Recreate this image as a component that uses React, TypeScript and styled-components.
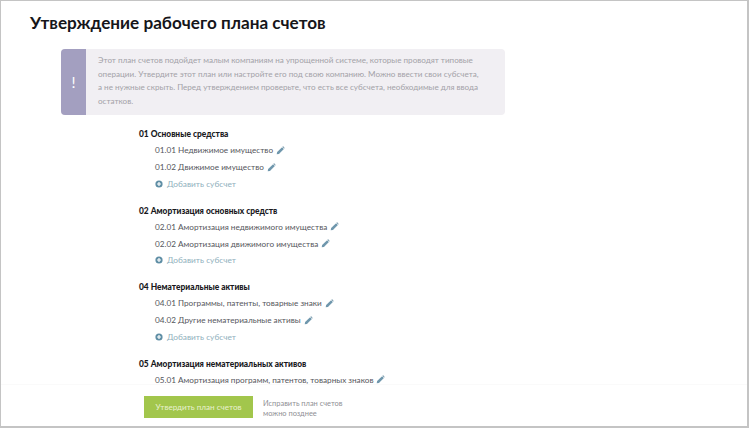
import React from "react";
import styled, { createGlobalStyle } from "styled-components";

const Global = createGlobalStyle`
  html, body { margin: 0; padding: 0; background: #fff; }
  body { font-family: "Lato", "Noto Sans", sans-serif; }
`;

const Frame = styled.div`
  width: 749px;
  height: 428px;
  box-sizing: border-box;
  border: 1px solid #c4c4c4;
  border-width: 1px 2px 2px 1px;
  overflow: hidden;
  position: relative;
  display: flex;
  flex-direction: column;
`;

const Title = styled.h1`
  margin: 10px 0 0 29px;
  font-size: 17.15px;
  line-height: 24px;
  font-weight: 700;
  color: #16161a;
`;

const Notice = styled.div`
  margin: 14px 0 0 60px;
  width: 444px;
  height: 66px;
  display: flex;
  border-radius: 4px;
  overflow: hidden;
  background: #f1eff3;
`;

const NoticeMark = styled.div`
  flex: 0 0 25px;
  background: #a39fc0;
  color: #fff;
  font-size: 15px;
  font-weight: 400;
  display: flex;
  align-items: center;
  justify-content: center;
`;

const NoticeText = styled.p`
  margin: 0;
  padding: 5px 8px 0 12px;
  font-size: 8.1px;
  line-height: 13.7px;
  color: #a3a2a8;
  white-space: nowrap;
`;

const Plan = styled.div`
  margin: 11px 0 0 138px;
  display: flex;
  flex-direction: column;
  gap: 10.25px;
`;

const Group = styled.section`
  display: flex;
  flex-direction: column;
`;

const GroupTitle = styled.div`
  font-size: 8.4px;
  font-weight: 900;
  line-height: 16px;
  color: #18181c;
`;

const Row = styled.div`
  display: flex;
  align-items: center;
  gap: 3px;
  height: 16.75px;
  margin-left: 16px;
  font-size: 8.2px;
  color: #55565c;
`;

const AddLink = styled(Row)`
  gap: 4px;
  font-size: 8.3px;
  color: #8fb0bd;
`;

const Footer = styled.div`
  position: absolute;
  left: 0;
  right: 0;
  bottom: 0;
  height: 41px;
  background: #fff;
  box-shadow: 0 -1px 1px rgba(0, 0, 0, 0.02);
  display: flex;
  align-items: flex-start;
  padding: 11px 0 0 143px;
  box-sizing: border-box;
`;

const Approve = styled.button`
  width: 109px;
  height: 22px;
  border: 0;
  padding: 0;
  background: #a2c64c;
  color: #e8f1d0;
  font-family: inherit;
  font-size: 8.1px;
`;

const Hint = styled.div`
  margin: 3px 0 0 10px;
  font-size: 7.45px;
  line-height: 10px;
  color: #8f8f94;
`;

const Pencil = () => (
  <svg width="9" height="9" viewBox="0 0 8 8">
    <path d="M0.6 7.4 L1 5.4 L5.4 1 L7 2.6 L2.6 7 Z" fill="#6f97ad" />
    <path d="M5.8 0.6 L6.3 0.3 L7.7 1.7 L7.4 2.2 Z" fill="#4e7a92" />
  </svg>
);

const Plus = () => (
  <svg width="8" height="8" viewBox="0 0 8 8">
    <circle cx="4" cy="4" r="3.6" fill="#5f8ea5" />
    <path d="M4 2 V6 M2 4 H6" stroke="#fff" strokeWidth="1.2" />
  </svg>
);

type Account = { title: string; rows: string[]; add: boolean };

const accounts: Account[] = [
  { title: "01 Основные средства", rows: ["01.01 Недвижимое имущество", "01.02 Движимое имущество"], add: true },
  { title: "02 Амортизация основных средств", rows: ["02.01 Амортизация недвижимого имущества", "02.02 Амортизация движимого имущества"], add: true },
  { title: "04 Нематериальные активы", rows: ["04.01 Программы, патенты, товарные знаки", "04.02 Другие нематериальные активы"], add: true },
  { title: "05 Амортизация нематериальных активов", rows: ["05.01 Амортизация программ, патентов, товарных знаков"], add: false },
];

export default function App() {
  return (
    <Frame>
      <Global />
      <Title>Утверждение рабочего плана счетов</Title>
      <Notice>
        <NoticeMark>!</NoticeMark>
        <NoticeText>
          Этот план счетов подойдет малым компаниям на упрощенной системе, которые проводят типовые
          <br />
          операции. Утвердите этот план или настройте его под свою компанию. Можно ввести свои субсчета,
          <br />
          а не нужные скрыть. Перед утверждением проверьте, что есть все субсчета, необходимые для ввода
          <br />
          остатков.
        </NoticeText>
      </Notice>
      <Plan>
        {accounts.map((a) => (
          <Group key={a.title}>
            <GroupTitle>{a.title}</GroupTitle>
            {a.rows.map((r) => (
              <Row key={r}>
                {r} <Pencil />
              </Row>
            ))}
            {a.add && (
              <AddLink>
                <Plus /> Добавить субсчет
              </AddLink>
            )}
          </Group>
        ))}
      </Plan>
      <Footer>
        <Approve>Утвердить план счетов</Approve>
        <Hint>
          Исправить план счетов
          <br />
          можно позднее
        </Hint>
      </Footer>
    </Frame>
  );
}
